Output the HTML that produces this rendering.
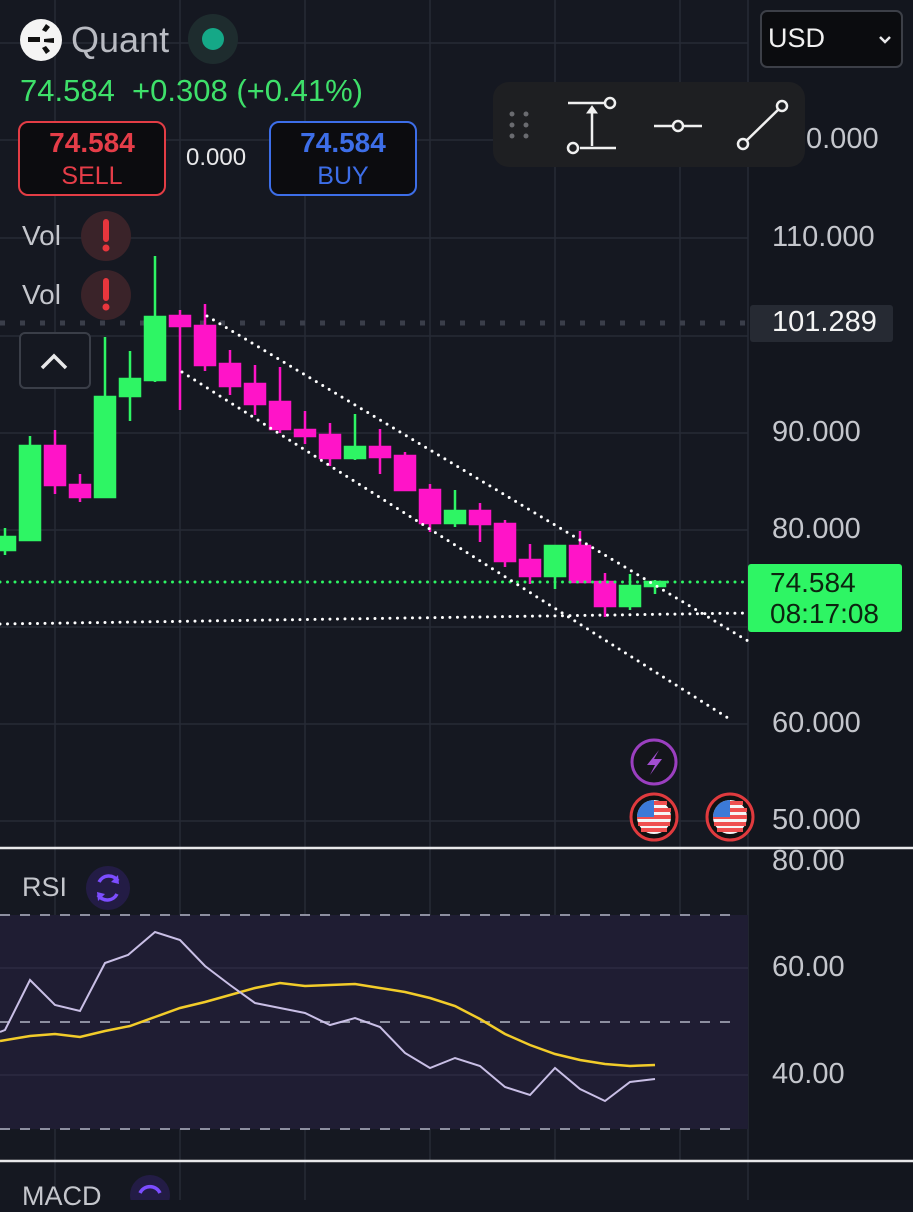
<!DOCTYPE html>
<html><head><meta charset="utf-8"><style>
html,body{margin:0;padding:0;background:#141720;}
body{width:913px;height:1200px;overflow:hidden;position:relative;font-family:"Liberation Sans",sans-serif;}
svg{position:absolute;left:0;top:0}
.t{position:absolute;white-space:nowrap}
.ax{position:absolute;left:772px;color:#c4c6cc;font-size:29px;}
</style></head><body>
<svg width="913" height="1200" viewBox="0 0 913 1200">
<rect x="0" y="0" width="913" height="1200" fill="#151821"/>
<rect x="748" y="0" width="165" height="1200" fill="#13161e"/>
<g stroke="#262a36" stroke-width="1.5">
<line x1="55" y1="0" x2="55" y2="848"/><line x1="180" y1="0" x2="180" y2="848"/><line x1="305" y1="0" x2="305" y2="848"/><line x1="430" y1="0" x2="430" y2="848"/><line x1="555" y1="0" x2="555" y2="848"/><line x1="680" y1="0" x2="680" y2="848"/>
<line x1="748" y1="0" x2="748" y2="1200"/>
<line x1="0" y1="43" x2="748" y2="43"/><line x1="0" y1="140" x2="748" y2="140"/><line x1="0" y1="238" x2="748" y2="238"/><line x1="0" y1="336" x2="748" y2="336"/><line x1="0" y1="433" x2="748" y2="433"/><line x1="0" y1="530" x2="748" y2="530"/><line x1="0" y1="627" x2="748" y2="627"/><line x1="0" y1="724" x2="748" y2="724"/><line x1="0" y1="821" x2="748" y2="821"/>
<line x1="55" y1="848" x2="55" y2="1161"/><line x1="180" y1="848" x2="180" y2="1161"/><line x1="305" y1="848" x2="305" y2="1161"/><line x1="430" y1="848" x2="430" y2="1161"/><line x1="555" y1="848" x2="555" y2="1161"/><line x1="680" y1="848" x2="680" y2="1161"/>
<line x1="55" y1="1161" x2="55" y2="1200"/><line x1="180" y1="1161" x2="180" y2="1200"/><line x1="305" y1="1161" x2="305" y2="1200"/>
</g>
<line x1="0" y1="323" x2="748" y2="323" stroke="#3a3e4a" stroke-width="5" stroke-dasharray="5 15"/>
<g stroke-width="2.5">
<g fill="#2ef564" stroke="#2ef564">
<line x1="5" y1="528" x2="5" y2="555"/><rect x="-5" y="537" width="20" height="13"/>
<line x1="30" y1="436" x2="30" y2="540"/><rect x="20" y="446" width="20" height="94"/>
<line x1="105" y1="337" x2="105" y2="497"/><rect x="95" y="397" width="20" height="100"/>
<line x1="130" y1="351" x2="130" y2="421"/><rect x="120" y="379" width="20" height="17"/>
<line x1="155" y1="256" x2="155" y2="382"/><rect x="145" y="317" width="20" height="63"/>
<line x1="355" y1="414" x2="355" y2="460"/><rect x="345" y="447" width="20" height="11"/>
<line x1="455" y1="490" x2="455" y2="527"/><rect x="445" y="511" width="20" height="12"/>
<line x1="555" y1="545" x2="555" y2="589"/><rect x="545" y="546" width="20" height="30"/>
<line x1="630" y1="574" x2="630" y2="610"/><rect x="620" y="586" width="20" height="20"/>
<line x1="655" y1="580" x2="655" y2="594"/><rect x="645" y="582" width="20" height="4"/>
</g>
<g fill="#ff14c8" stroke="#ff14c8">
<line x1="55" y1="430" x2="55" y2="494"/><rect x="45" y="446" width="20" height="39"/>
<line x1="80" y1="474" x2="80" y2="502"/><rect x="70" y="485" width="20" height="12"/>
<line x1="180" y1="310" x2="180" y2="410"/><rect x="170" y="316" width="20" height="10"/>
<line x1="205" y1="304" x2="205" y2="371"/><rect x="195" y="326" width="20" height="39"/>
<line x1="230" y1="350" x2="230" y2="395"/><rect x="220" y="364" width="20" height="22"/>
<line x1="255" y1="365" x2="255" y2="415"/><rect x="245" y="384" width="20" height="20"/>
<line x1="280" y1="367" x2="280" y2="433"/><rect x="270" y="402" width="20" height="27"/>
<line x1="305" y1="411" x2="305" y2="444"/><rect x="295" y="430" width="20" height="6"/>
<line x1="330" y1="423" x2="330" y2="466"/><rect x="320" y="435" width="20" height="23"/>
<line x1="380" y1="429" x2="380" y2="474"/><rect x="370" y="447" width="20" height="10"/>
<line x1="405" y1="452" x2="405" y2="490"/><rect x="395" y="456" width="20" height="34"/>
<line x1="430" y1="484" x2="430" y2="532"/><rect x="420" y="490" width="20" height="33"/>
<line x1="480" y1="503" x2="480" y2="542"/><rect x="470" y="511" width="20" height="13"/>
<line x1="505" y1="520" x2="505" y2="567"/><rect x="495" y="524" width="20" height="37"/>
<line x1="530" y1="544" x2="530" y2="584"/><rect x="520" y="560" width="20" height="16"/>
<line x1="580" y1="531" x2="580" y2="582"/><rect x="570" y="546" width="20" height="36"/>
<line x1="605" y1="573" x2="605" y2="617"/><rect x="595" y="582" width="20" height="24"/>
</g>
</g>
<g stroke-linecap="round" stroke-width="3" stroke-dasharray="0 7.5">
<line x1="0" y1="582" x2="748" y2="582" stroke="#2ef564"/>
<line x1="0" y1="624" x2="748" y2="613" stroke="#ffffff"/>
<line x1="207" y1="316" x2="748" y2="641" stroke="#ffffff"/>
<line x1="182" y1="372" x2="728" y2="718" stroke="#ffffff"/>
</g>
<circle cx="654" cy="762" r="22" fill="#14151b" stroke="#9b3fc0" stroke-width="3"/>
<path d="M659 750 L647 765 L655 765 L650 775 L662 759 L654 759 Z" fill="#a24ed0"/>
<g>
<circle cx="654" cy="817" r="23" fill="#111" stroke="#e03a3e" stroke-width="3"/>
<circle cx="654" cy="817" r="17" fill="#f5f5f5"/>
<path d="M637 817 h34 M638 824 h32 M641 830 h26 M654 803 h13 M654 810 h17" stroke="#ef4f4f" stroke-width="4"/>
<path d="M654 800 A17 17 0 0 0 637 817 L654 817 Z" fill="#3b7ad8"/>
<circle cx="730" cy="817" r="23" fill="#111" stroke="#e03a3e" stroke-width="3"/>
<circle cx="730" cy="817" r="17" fill="#f5f5f5"/>
<path d="M713 817 h34 M714 824 h32 M717 830 h26 M730 803 h13 M730 810 h17" stroke="#ef4f4f" stroke-width="4"/>
<path d="M730 800 A17 17 0 0 0 713 817 L730 817 Z" fill="#3b7ad8"/>
</g>
<line x1="0" y1="848" x2="913" y2="848" stroke="#e8e8ea" stroke-width="2.5"/>
<line x1="0" y1="1161" x2="913" y2="1161" stroke="#e8e8ea" stroke-width="2.5"/>
<rect x="0" y="915" width="748" height="214" fill="#1f1d33"/>
<g stroke="#2d2b42" stroke-width="1.5"><line x1="0" y1="968" x2="748" y2="968"/><line x1="0" y1="1075" x2="748" y2="1075"/></g>
<g stroke="#8d8fa0" stroke-width="2" stroke-dasharray="10 10">
<line x1="0" y1="915" x2="740" y2="915"/><line x1="0" y1="1022" x2="740" y2="1022"/><line x1="0" y1="1129" x2="740" y2="1129"/>
</g>
<polyline fill="none" stroke="#f2cc2a" stroke-width="2.5" points="0,1041 30,1036 55,1034 80,1037 105,1031 130,1026 155,1017 180,1008 205,1002 230,995 255,988 280,983 305,986 330,985 355,984 380,988 405,992 430,998 455,1006 480,1019 505,1034 530,1045 555,1054 580,1060 605,1064 630,1066 655,1065"/>
<polyline fill="none" stroke="#c9bfe6" stroke-width="2" points="0,1032 5,1030 30,980 55,1005 80,1011 105,963 128,955 155,932 180,940 205,966 230,985 255,1003 280,1008 305,1013 330,1025 355,1018 380,1027 405,1053 430,1068 455,1058 480,1066 505,1087 530,1095 555,1068 580,1089 605,1101 630,1082 655,1079"/>
<circle cx="108" cy="888" r="22" fill="#231c45"/>
<path d="M99 882 A11 11 0 0 1 118 881 M117 894 A11 11 0 0 1 98 895" fill="none" stroke="#7c4dff" stroke-width="3.5"/>
<path d="M118 875 l1 9 l-8 -2 Z M98 901 l-1 -9 l8 2 Z" fill="#7c4dff"/>
<circle cx="150" cy="1195" r="20" fill="#231c45"/>
<path d="M140 1193 A11 11 0 0 1 160 1193" fill="none" stroke="#7c4dff" stroke-width="3.5"/>
<circle cx="41" cy="40" r="21" fill="#f4f4f4"/>
<path d="M28 37 h12 v5 h-12 Z M42 30 l4 -6 4 3 -4 5 Z M42 48 l4 6 4 -3 -4 -5 Z M44 39 l10 -1 v5 l-10 -1 Z" fill="#111"/>
<circle cx="213" cy="39" r="25" fill="#1e2c2e"/>
<circle cx="213" cy="39" r="11" fill="#15a887"/>
<circle cx="106" cy="236" r="25" fill="#3a2329"/>
<circle cx="106" cy="295" r="25" fill="#3a2329"/>
<path d="M106 222 v17 M106 281 v17" stroke="#e8363d" stroke-width="6" stroke-linecap="round"/>
<circle cx="106" cy="248" r="3.5" fill="#e8363d"/><circle cx="106" cy="307" r="3.5" fill="#e8363d"/>
<rect x="20" y="333" width="70" height="55" rx="5" fill="#151821" stroke="#3a3e48" stroke-width="2"/>
<path d="M42 368 L54 356 L66 368" fill="none" stroke="#e8e8ea" stroke-width="3.5"/>
<rect x="493" y="82" width="312" height="85" rx="16" fill="#1e1f22"/>
<g fill="#6a6b70"><circle cx="512" cy="114" r="2.5"/><circle cx="526" cy="114" r="2.5"/><circle cx="512" cy="125" r="2.5"/><circle cx="526" cy="125" r="2.5"/><circle cx="512" cy="136" r="2.5"/><circle cx="526" cy="136" r="2.5"/></g>
<g stroke="#f0f0f0" stroke-width="2.5" fill="#1e1f22">
<path d="M568 103 h36 M580 148 h36 M592 146 v-38" fill="none"/>
<path d="M592 106 l-5 7 h10 Z" fill="#f0f0f0" stroke-width="1"/>
<circle cx="610" cy="103" r="5"/><circle cx="573" cy="148" r="5"/>
<path d="M654 126 h48" fill="none"/><circle cx="678" cy="126" r="5"/>
<path d="M743 144 L782 106" fill="none"/><circle cx="743" cy="144" r="5"/><circle cx="782" cy="106" r="5"/>
</g>
<rect x="761" y="11" width="141" height="56" rx="6" fill="#0b0c0f" stroke="#3c3f47" stroke-width="2"/>
<path d="M880 37 l5 5 l5 -5" fill="none" stroke="#e8e8ea" stroke-width="2.5"/>
<rect x="19" y="122" width="146" height="73" rx="9" fill="#0c0c0f" stroke="#e33d45" stroke-width="2"/>
<rect x="270" y="122" width="146" height="73" rx="9" fill="#0c0c0f" stroke="#3d6ee8" stroke-width="2"/>
<rect x="750" y="305" width="143" height="37" rx="3" fill="#262a33"/>
<rect x="748" y="564" width="154" height="68" rx="3" fill="#2ef564"/>
</svg>
<div class="t" style="left:71px;top:19px;font-size:36px;color:#b9bbc2">Quant</div>
<div class="t" style="left:20px;top:73px;font-size:31px;color:#3ee06a">74.584&nbsp; +0.308 (+0.41%)</div>
<div class="t" style="left:19px;top:127px;width:146px;text-align:center;font-size:28px;font-weight:bold;color:#e53d48">74.584</div>
<div class="t" style="left:19px;top:162px;width:146px;text-align:center;font-size:25px;color:#e53d48">SELL</div>
<div class="t" style="left:270px;top:127px;width:146px;text-align:center;font-size:28px;font-weight:bold;color:#3d6ee8">74.584</div>
<div class="t" style="left:270px;top:162px;width:146px;text-align:center;font-size:25px;color:#3d6ee8">BUY</div>
<div class="t" style="left:186px;top:144px;font-size:24px;color:#e8e8ea">0.000</div>
<div class="t" style="left:22px;top:220px;font-size:28px;color:#c4c6cc">Vol</div>
<div class="t" style="left:22px;top:279px;font-size:28px;color:#c4c6cc">Vol</div>
<div class="t" style="left:768px;top:23px;font-size:27px;color:#f0f0f0">USD</div>
<div class="ax" style="left:806px;top:123px">0.000</div>
<div class="ax" style="top:221px">110.000</div>
<div class="ax" style="top:306px;color:#f4f4f4">101.289</div>
<div class="ax" style="top:416px">90.000</div>
<div class="ax" style="top:513px">80.000</div>
<div class="t" style="left:770px;top:567px;font-size:28px;color:#0c2410;line-height:31px">74.584<br>08:17:08</div>
<div class="ax" style="top:707px">60.000</div>
<div class="ax" style="top:804px">50.000</div>
<div class="ax" style="top:845px">80.00</div>
<div class="ax" style="top:951px">60.00</div>
<div class="ax" style="top:1058px">40.00</div>
<div class="t" style="left:22px;top:872px;font-size:27px;color:#c4c6cc">RSI</div>
<div class="t" style="left:22px;top:1181px;font-size:27px;color:#c4c6cc">MACD</div>
</body></html>
